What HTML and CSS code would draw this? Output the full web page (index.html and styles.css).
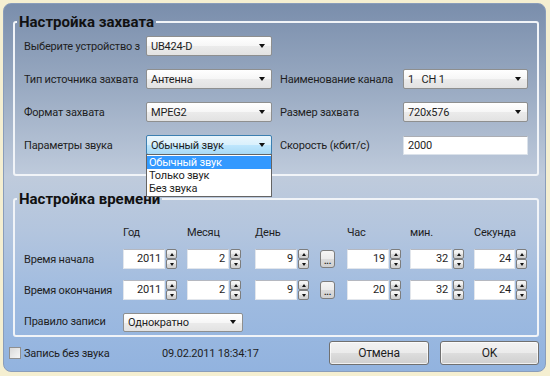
FILE: index.html
```html
<!DOCTYPE html>
<html lang="ru">

<head>
    <meta charset="UTF-8">
    <title>Параметры записи</title>
    <link rel="stylesheet" href="styles.css">
</head>

<body>
    <div class="window">
        <fieldset class="group capture">
            <legend>Настройка захвата</legend>
            <div class="form-grid">
                <div class="label clip">Выберите устройство захвата</div>
                <div class="combo"><span>UB424-D</span><i class="arrow"></i></div>
                <div></div>
                <div></div>

                <div class="label">Тип источника захвата</div>
                <div class="combo"><span>Антенна</span><i class="arrow"></i></div>
                <div class="label">Наименование канала</div>
                <div class="combo"><span>1&nbsp;&nbsp;&nbsp;CH 1</span><i class="arrow"></i></div>

                <div class="label">Формат захвата</div>
                <div class="combo"><span>MPEG2</span><i class="arrow"></i></div>
                <div class="label">Размер захвата</div>
                <div class="combo"><span>720x576</span><i class="arrow"></i></div>

                <div class="label">Параметры звука</div>
                <div class="combo focused">
                    <span>Обычный звук</span><i class="arrow"></i>
                    <ul class="popup">
                        <li class="selected">Обычный звук</li>
                        <li>Только звук</li>
                        <li>Без звука</li>
                    </ul>
                </div>
                <div class="label">Скорость (кбит/с)</div>
                <div class="textbox">2000</div>
            </div>
        </fieldset>

        <fieldset class="group timing">
            <legend>Настройка времени</legend>
            <div class="time-grid">
                <div></div>
                <div class="head">Год</div>
                <div class="head">Месяц</div>
                <div class="head">День</div>
                <div></div>
                <div class="head">Час</div>
                <div class="head">мин.</div>
                <div class="head">Секунда</div>

                <div class="label">Время начала</div>
                <div class="spin"><div class="num">2011</div><div class="spin-btns"><i class="up"></i><i class="down"></i></div></div>
                <div class="spin"><div class="num">2</div><div class="spin-btns"><i class="up"></i><i class="down"></i></div></div>
                <div class="spin"><div class="num">9</div><div class="spin-btns"><i class="up"></i><i class="down"></i></div></div>
                <div class="dots">...</div>
                <div class="spin"><div class="num">19</div><div class="spin-btns"><i class="up"></i><i class="down"></i></div></div>
                <div class="spin"><div class="num">32</div><div class="spin-btns"><i class="up"></i><i class="down"></i></div></div>
                <div class="spin"><div class="num">24</div><div class="spin-btns"><i class="up"></i><i class="down"></i></div></div>

                <div class="label">Время окончания</div>
                <div class="spin"><div class="num">2011</div><div class="spin-btns"><i class="up"></i><i class="down"></i></div></div>
                <div class="spin"><div class="num">2</div><div class="spin-btns"><i class="up"></i><i class="down"></i></div></div>
                <div class="spin"><div class="num">9</div><div class="spin-btns"><i class="up"></i><i class="down"></i></div></div>
                <div class="dots">...</div>
                <div class="spin"><div class="num">20</div><div class="spin-btns"><i class="up"></i><i class="down"></i></div></div>
                <div class="spin"><div class="num">32</div><div class="spin-btns"><i class="up"></i><i class="down"></i></div></div>
                <div class="spin"><div class="num">24</div><div class="spin-btns"><i class="up"></i><i class="down"></i></div></div>

                <div class="label">Правило записи</div>
                <div class="combo rule"><span>Однократно</span><i class="arrow"></i></div>
            </div>
        </fieldset>

        <div class="bottom-bar">
            <label class="check"><i class="box"></i>Запись без звука</label>
            <span class="date">09.02.2011 18:34:17</span>
            <div class="btn">Отмена</div>
            <div class="btn">OK</div>
        </div>
    </div>
</body>

</html>
```

FILE: styles.css
```css
body {
    margin: 0;
    padding: 3px;
    background-color: #f5efd1;
    font-family: Roboto, "Open Sans", sans-serif;
    font-size: 11px;
    letter-spacing: -0.2px;
    color: #1e1e1e;
}

.window {
    width: 543px;
    height: 369px;
    box-sizing: border-box;
    border: 1px solid #8a9dba;
    border-radius: 8px;
    padding: 8px 6px 0 9px;
    background: linear-gradient(to bottom, #7a8eac 0%, #98a9c1 22%, #bfcbdc 47%, #b3c5de 62%, #9fbbe0 80%, #92b3df 100%);
}

.group {
    margin: 0;
    border: 2px solid #f1f4f8;
    border-radius: 3px;
    padding: 4px 9px 19px;
    min-width: 0;
}

.group legend {
    font-size: 15px;
    font-weight: bold;
    letter-spacing: 0;
    line-height: 20px;
    padding: 0 2px;
    margin-left: -7px;
    color: #111;
}

.timing {
    margin-top: 13px;
    padding: 17px 9px 4px;
}

.form-grid {
    display: grid;
    grid-template-columns: 122px 134px 123px 125px;
    grid-auto-rows: 20px;
    row-gap: 13px;
    align-items: center;
}

.label {
    white-space: nowrap;
}

.clip {
    width: 116px;
    overflow: hidden;
}

.combo {
    position: relative;
    display: flex;
    align-items: center;
    width: 126px;
    height: 20px;
    box-sizing: border-box;
    padding: 0 6px 0 4px;
    border: 1px solid #8e8f8f;
    border-radius: 2px;
    background: linear-gradient(to bottom, #ffffff 0%, #f6f6f6 50%, #ebebeb 51%, #e2e2e2 100%);
}

.form-grid .combo:nth-child(4n) {
    width: 125px;
}

.combo .arrow {
    margin-left: auto;
    width: 0;
    height: 0;
    border-left: 3px solid transparent;
    border-right: 3px solid transparent;
    border-top: 4px solid #111;
}

.combo.focused {
    border-color: #3c7fb1;
    background: linear-gradient(to bottom, #eaf6fd 0%, #d9f0fc 50%, #bee6fd 51%, #a7d9f5 100%);
}

.popup {
    position: absolute;
    top: 18px;
    left: -1px;
    z-index: 2;
    width: 126px;
    box-sizing: border-box;
    margin: 0;
    padding: 1px 0;
    list-style: none;
    background: #fff;
    border: 1px solid #646464;
}

.popup li {
    height: 13px;
    line-height: 13px;
    padding-left: 2px;
}

.popup li.selected {
    background: #3399ff;
    color: #fff;
}

.textbox {
    width: 125px;
    height: 19px;
    box-sizing: border-box;
    padding-left: 4px;
    line-height: 17px;
    background: #fff;
    border: 1px solid #dbe2ea;
    border-top-color: #abadb3;
}

.time-grid {
    display: grid;
    grid-template-columns: 99px 64px 68px 65px 27px 63px 64px 53px;
    grid-template-rows: 12px 20px 20px 20px;
    row-gap: 11px;
    align-items: center;
}

.head {
    line-height: 12px;
    margin-bottom: -2px;
}

.time-grid .label:last-of-type,
.combo.rule {
    margin-top: 2px;
}

.spin {
    display: flex;
    gap: 1px;
}

.num {
    width: 42px;
    height: 20px;
    box-sizing: border-box;
    padding-right: 3px;
    text-align: right;
    line-height: 18px;
    background: #fff;
    border: 1px solid #e2e6ec;
    border-top-color: #b5b8c0;
}

.spin-btns {
    display: flex;
    flex-direction: column;
}

.spin-btns i {
    display: flex;
    align-items: center;
    justify-content: center;
    width: 11px;
    height: 10px;
    box-sizing: border-box;
    border: 1px solid #7d7d7d;
    border-radius: 2px;
    background: linear-gradient(to bottom, #f7f7f7 0%, #ececec 50%, #dcdcdc 51%, #cfcfcf 100%);
}

.spin-btns i::after {
    content: "";
    width: 0;
    height: 0;
    border-left: 2.5px solid transparent;
    border-right: 2.5px solid transparent;
}

.spin-btns .up::after {
    border-bottom: 3px solid #111;
}

.spin-btns .down::after {
    border-top: 3px solid #111;
}

.dots {
    width: 15px;
    height: 18px;
    box-sizing: border-box;
    border: 1px solid #7d7d7d;
    border-radius: 3px;
    background: linear-gradient(to bottom, #f5f5f5 0%, #ebebeb 50%, #dcdcdc 51%, #d0d0d0 100%);
    font-size: 9px;
    line-height: 20px;
    text-align: center;
    font-weight: bold;
}

.combo.rule {
    grid-column: 2 / 5;
    width: 120px;
    height: 19px;
}

.bottom-bar {
    display: flex;
    align-items: center;
    margin-top: 4px;
    margin-left: -4px;
}

.check {
    display: flex;
    align-items: center;
    gap: 3px;
    width: 153px;
}

.check .box {
    width: 12px;
    height: 12px;
    box-sizing: border-box;
    border: 1px solid #8f8f8f;
    background: linear-gradient(135deg, #d9d9d9, #f6f6f6);
}

.date {
    flex: 1;
}

.btn {
    width: 100px;
    height: 24px;
    box-sizing: border-box;
    border: 1px solid #707070;
    border-radius: 3px;
    background: linear-gradient(to bottom, #f2f2f2 0%, #ebebeb 50%, #dddddd 51%, #cfcfcf 100%);
    box-shadow: inset 0 0 0 1px rgba(255, 255, 255, 0.7);
    text-align: center;
    line-height: 22px;
    font-size: 12px;
}

.btn + .btn {
    width: 99px;
    margin-left: 11px;
}
```
